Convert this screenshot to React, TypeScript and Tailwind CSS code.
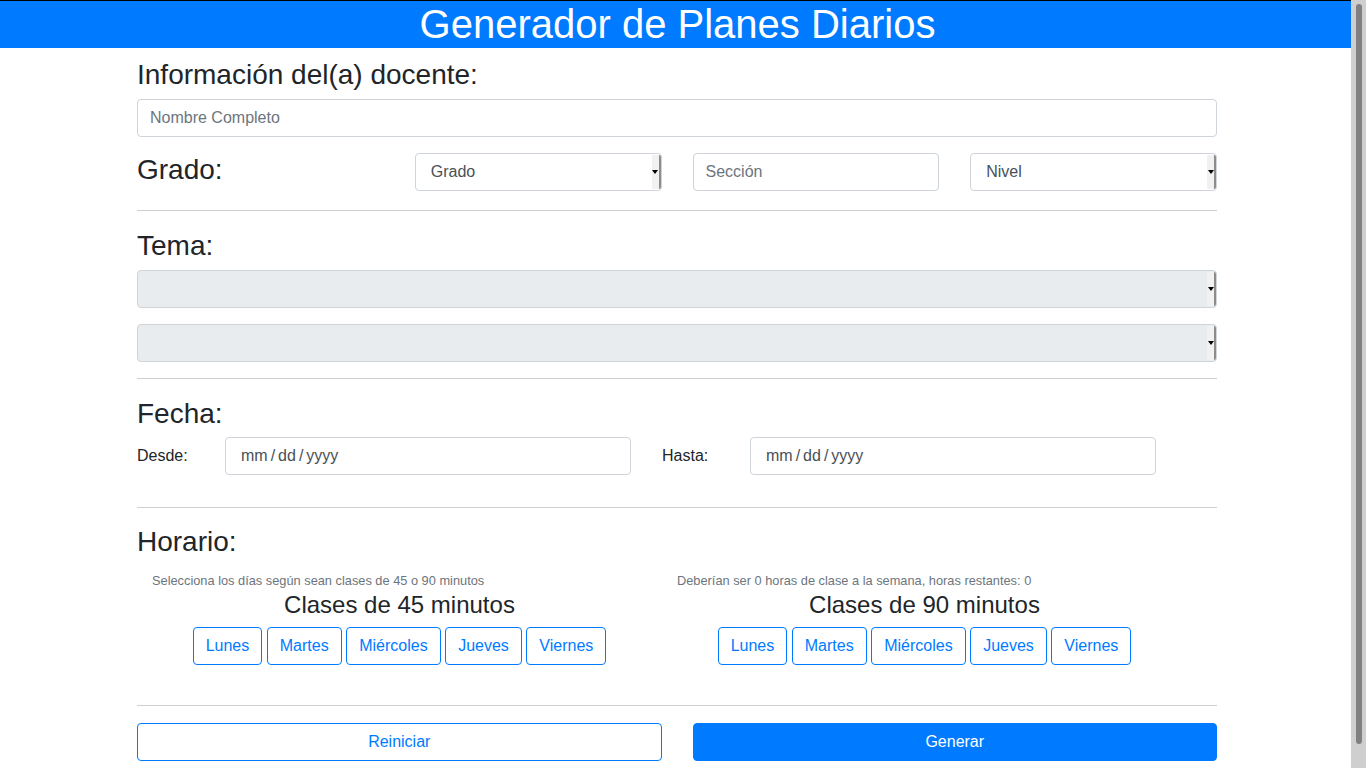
import React from 'react';

const dias = ['Lunes', 'Martes', 'Miércoles', 'Jueves', 'Viernes'];

// native-looking select with the little arrow strip on the right
const FakeSelect: React.FC<{ label?: string; disabled?: boolean }> = ({ label, disabled }) => (
  <div
    className={`flex h-[38px] items-stretch rounded border border-[#ced4da] ${
      disabled ? 'bg-[#e9ecef]' : 'bg-white'
    }`}
  >
    <span className="flex flex-1 items-center pl-[15px] text-base text-[#495057]">{label}</span>
    <div className="my-px flex w-[9px] items-center justify-center rounded-r-[2px] border-r-2 border-[#8c8c8c] bg-[#f1f1f1]">
      <span className="h-0 w-0 border-x-[3px] border-t-[4px] border-x-transparent border-t-black" />
    </div>
  </div>
);

const DateField: React.FC = () => (
  <div className="flex h-[38px] w-[406px] items-center gap-[3px] rounded border border-[#ced4da] pl-[15px] text-base text-[#495057]">
    <span>mm</span>
    <span>/</span>
    <span>dd</span>
    <span>/</span>
    <span>yyyy</span>
  </div>
);

const Rule: React.FC<{ className?: string }> = ({ className }) => (
  <hr className={`border-0 border-t border-[#cfcfcf] ${className ?? ''}`} />
);

const DayButtons: React.FC = () => (
  <div className="flex justify-center gap-[4.5px]">
    {dias.map((d) => (
      <button
        key={d}
        className="h-[38px] rounded border border-[#007bff] px-3 text-base text-[#007bff] hover:bg-[#007bff] hover:text-white"
      >
        {d}
      </button>
    ))}
  </div>
);

const App: React.FC = () => {
  return (
    <div className="min-h-screen bg-white font-['Liberation_Sans',Arial,sans-serif] text-[#212529]">
      <div className="mr-[15px] pb-[40px]">
        {/* Header */}
        <header className="h-[48px] border-t border-black bg-[#007bff] pl-[4px] text-center text-[40px] leading-[46px] text-white">
          Generador de Planes Diarios
        </header>

        <div className="ml-[137px] w-[1080px]">
          {/* Docente */}
          <h3 className="mt-[10px] mb-[7px] text-[28px] leading-[33.6px]">Información del(a) docente:</h3>
          <input
            className="h-[38px] w-full rounded border border-[#ced4da] px-3 text-base placeholder:text-[#6c757d]"
            placeholder="Nombre Completo"
          />

          <div className="mt-[16px] grid grid-cols-4 gap-[31px]">
            <h3 className="text-[28px] leading-[34px]">Grado:</h3>
            <FakeSelect label="Grado" />
            <input
              className="h-[38px] w-full rounded border border-[#ced4da] px-3 text-base placeholder:text-[#6c757d]"
              placeholder="Sección"
            />
            <FakeSelect label="Nivel" />
          </div>

          <Rule className="mt-[19px]" />

          {/* Tema */}
          <h3 className="mt-[18px] mb-[8px] text-[28px] leading-[33.6px]">Tema:</h3>
          <FakeSelect disabled />
          <div className="mt-[16px]">
            <FakeSelect disabled />
          </div>

          <Rule className="mt-[16px]" />

          {/* Fecha */}
          <h3 className="mt-[18px] mb-[6px] text-[28px] leading-[33.6px]">Fecha:</h3>
          <div className="grid grid-cols-[525px_525px]">
            <div className="flex items-center">
              <label className="w-[88px] text-base">Desde:</label>
              <DateField />
            </div>
            <div className="flex items-center">
              <label className="w-[88px] text-base">Hasta:</label>
              <DateField />
            </div>
          </div>

          <Rule className="mt-[32px]" />

          {/* Horario */}
          <h3 className="mt-[17px] text-[28px] leading-[33.6px]">Horario:</h3>
          <div className="mt-[13px] grid grid-cols-[525px_525px]">
            <div>
              <p className="pl-[15px] text-[12.8px] leading-[19px] text-[#6c757d]">
                Selecciona los días según sean clases de 45 o 90 minutos
              </p>
              <h4 className="mt-[1px] mb-[7px] text-center text-[24px] leading-[28.8px]">Clases de 45 minutos</h4>
              <DayButtons />
            </div>
            <div>
              <p className="pl-[15px] text-[12.8px] leading-[19px] text-[#6c757d]">
                Deberían ser 0 horas de clase a la semana, horas restantes: 0
              </p>
              <h4 className="mt-[1px] mb-[7px] text-center text-[24px] leading-[28.8px]">Clases de 90 minutos</h4>
              <DayButtons />
            </div>
          </div>

          <Rule className="mt-[40px]" />

          {/* Acciones */}
          <div className="mt-[17px] grid grid-cols-2 gap-[31px]">
            <button className="h-[38px] rounded border border-[#007bff] text-base text-[#007bff]">Reiniciar</button>
            <button className="h-[38px] rounded border border-[#007bff] bg-[#007bff] text-base text-white">
              Generar
            </button>
          </div>
        </div>
      </div>

      {/* scrollbar as in the screenshot */}
      <div className="fixed top-0 right-0 flex h-screen w-[15px] justify-center bg-[#cfcfcf] pt-[4px]">
        <div className="h-[740px] w-[6px] rounded-full bg-[#808080]" />
      </div>
    </div>
  );
};

export default App;
